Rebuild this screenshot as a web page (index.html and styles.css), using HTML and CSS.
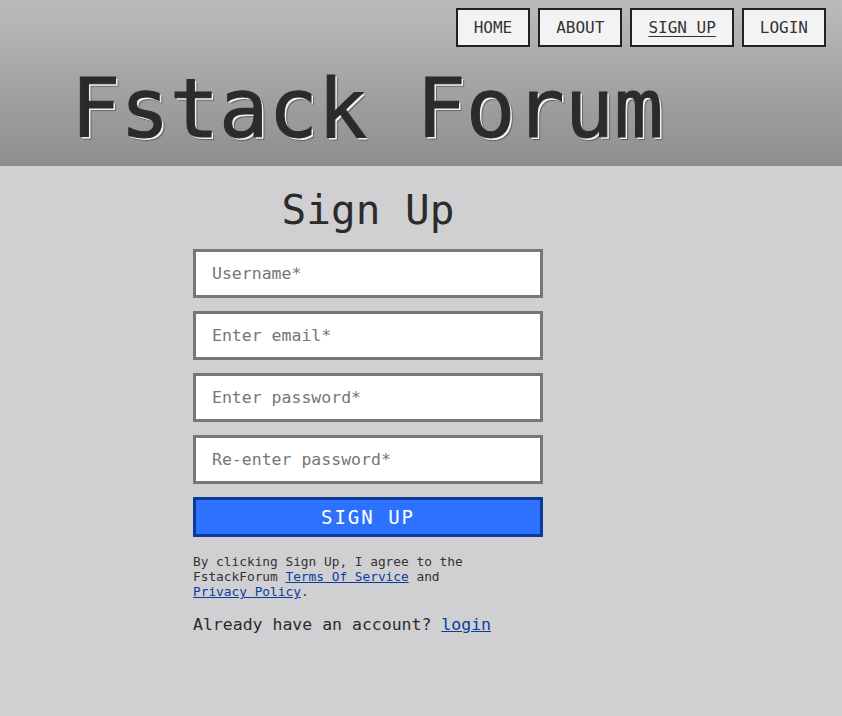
FILE: index.html
```html
<!DOCTYPE html>
<html>
<head>
<meta charset="utf-8">
<title>Fstack Forum - Sign Up</title>
<link rel="stylesheet" href="styles.css">
</head>
<body>
<header class="site-header">
  <nav class="nav">
    <a class="nav-btn" href="#">HOME</a>
    <a class="nav-btn" href="#">ABOUT</a>
    <a class="nav-btn nav-active" href="#">SIGN UP</a>
    <a class="nav-btn" href="#">LOGIN</a>
  </nav>
  <h1 class="site-title">Fstack Forum</h1>
</header>
<main class="main">
  <form class="signup">
    <h2 class="signup-title">Sign Up</h2>
    <input class="field" type="text" placeholder="Username*">
    <input class="field" type="email" placeholder="Enter email*">
    <input class="field" type="password" placeholder="Enter password*">
    <input class="field" type="password" placeholder="Re-enter password*">
    <button class="submit" type="button">SIGN UP</button>
    <p class="terms">By clicking Sign Up, I agree to the FstackForum <a href="#">Terms Of Service</a> and <a href="#">Privacy Policy</a>.</p>
    <p class="already">Already have an account? <a href="#">login</a></p>
  </form>
</main>
</body>
</html>
```

FILE: styles.css
```css
* { box-sizing: border-box; }
html, body { margin: 0; padding: 0; }
body {
  font-family: "DejaVu Sans Mono", "Liberation Mono", monospace;
  background: #d0d0d2;
  color: #2b2b2b;
  min-height: 716px;
}
.site-header {
  height: 166px;
  background: linear-gradient(to bottom, #bcbaba, #8e8e8e);
  display: flex;
  flex-direction: column;
}
.nav {
  display: flex;
  justify-content: flex-end;
  gap: 8px;
  padding: 8px 16px 0 0;
}
.nav-btn {
  display: block;
  height: 39px;
  padding: 0 16px;
  border: 2px solid #222;
  background: #f3f3f3;
  color: #333;
  font-size: 16px;
  line-height: 35px;
  text-decoration: none;
}
.nav-active { text-decoration: underline; text-underline-offset: 3px; }
.site-title {
  margin: 21px 0 0 71px;
  font-size: 82px;
  line-height: 82px;
  font-weight: normal;
  color: #2b2b2b;
  white-space: pre;
  -webkit-text-stroke: 1px #2b2b2b;
  text-shadow: 2px 2px 0 #f2f2f2, 3px 3px 1px rgba(0,0,0,0.35);
}
.main {
  padding: 24px 0 40px 193px;
}
.signup {
  width: 350px;
  display: flex;
  flex-direction: column;
}
.signup-title {
  margin: 0 0 18px;
  text-align: center;
  font-size: 41px;
  line-height: 41px;
  font-weight: normal;
  color: #2b2b2b;
}
.field {
  height: 49px;
  margin: 0 0 13px;
  padding: 0 16px;
  border: 3px solid #777;
  background: #fff;
  font-family: inherit;
  font-size: 16.5px;
  color: #333;
  outline: none;
}
.field::placeholder { color: #767676; }
.submit {
  height: 40px;
  border: 3px solid #0d3a96;
  background: #2d72fe;
  color: #fff;
  font-family: inherit;
  font-size: 19px;
  letter-spacing: 2px;
  padding: 0;
  cursor: pointer;
}
.terms {
  width: 282px;
  margin: 17px 0 0;
  font-size: 12.8px;
  line-height: 15px;
  color: #333;
}
.terms a, .already a { color: #0b3c9a; }
.already {
  margin: 16px 0 0;
  font-size: 16.5px;
  line-height: 20px;
  color: #2b2b2b;
}
```
